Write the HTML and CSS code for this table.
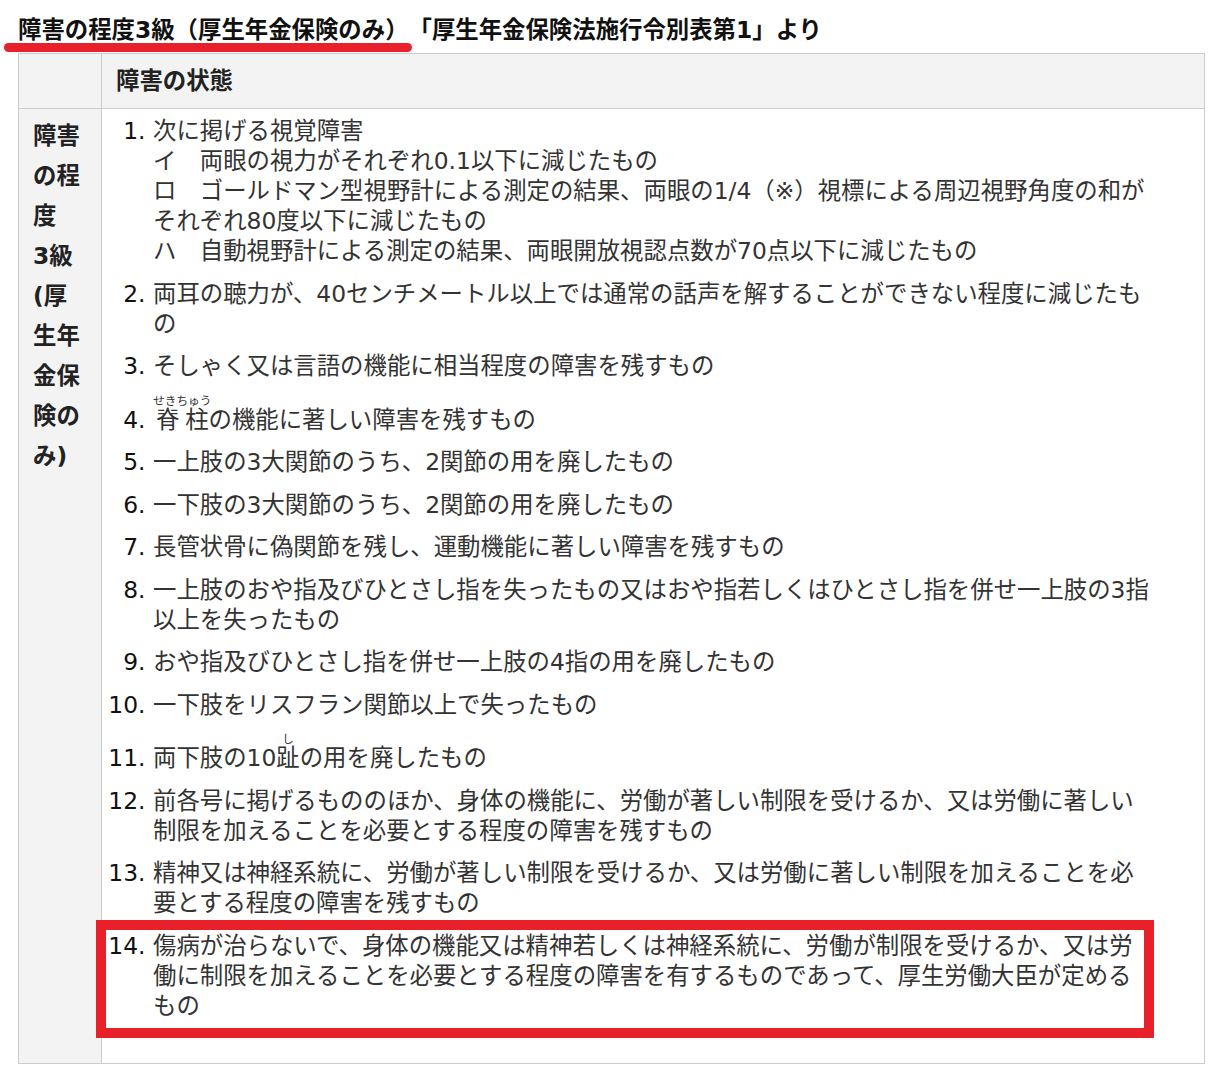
FILE: index.html
```html
<!DOCTYPE html>
<html lang="ja">

<head>
    <meta charset="UTF-8">
    <meta name="viewport" content="width=device-width, initial-scale=1.0">
    <title>障害の程度3級</title>
    <link rel="stylesheet" href="styles.css">
</head>

<body>
    <div class="page">
        <h2 class="title"><span class="marked">障害の程度3級（厚生年金保険のみ）</span>「厚生年金保険法施行令別表第1」より</h2>

        <table class="grade-table">
            <thead>
                <tr>
                    <th class="label"></th>
                    <th>障害の状態</th>
                </tr>
            </thead>
            <tbody>
                <tr>
                    <th class="label" scope="row">障害の程度<br>3級<br>(厚生年金保険のみ)</th>
                    <td>
                        <ol class="conditions">
                            <li>次に掲げる視覚障害<br>イ　両眼の視力がそれぞれ0.1以下に減じたもの<br>ロ　ゴールドマン型視野計による測定の結果、両眼の1/4（※）視標による周辺視野角度の和がそれぞれ80度以下に減じたもの<br>ハ　自動視野計による測定の結果、両眼開放視認点数が70点以下に減じたもの</li>
                            <li>両耳の聴力が、40センチメートル以上では通常の話声を解することができない程度に減じたもの</li>
                            <li>そしゃく又は言語の機能に相当程度の障害を残すもの</li>
                            <li><ruby>脊柱<rt>せきちゅう</rt></ruby>の機能に著しい障害を残すもの</li>
                            <li>一上肢の3大関節のうち、2関節の用を廃したもの</li>
                            <li>一下肢の3大関節のうち、2関節の用を廃したもの</li>
                            <li>長管状骨に偽関節を残し、運動機能に著しい障害を残すもの</li>
                            <li>一上肢のおや指及びひとさし指を失ったもの又はおや指若しくはひとさし指を併せ一上肢の3指以上を失ったもの</li>
                            <li>おや指及びひとさし指を併せ一上肢の4指の用を廃したもの</li>
                            <li>一下肢をリスフラン関節以上で失ったもの</li>
                            <li>両下肢の10<ruby>趾<rt>し</rt></ruby>の用を廃したもの</li>
                            <li>前各号に掲げるもののほか、身体の機能に、労働が著しい制限を受けるか、又は労働に著しい制限を加えることを必要とする程度の障害を残すもの</li>
                            <li>精神又は神経系統に、労働が著しい制限を受けるか、又は労働に著しい制限を加えることを必要とする程度の障害を残すもの</li>
                            <li class="highlight">傷病が治らないで、身体の機能又は精神若しくは神経系統に、労働が制限を受けるか、又は労働に制限を加えることを必要とする程度の障害を有するものであって、厚生労働大臣が定めるもの</li>
                        </ol>
                    </td>
                </tr>
            </tbody>
        </table>
    </div>
</body>

</html>
```

FILE: styles.css
```css
body {
    margin: 0;
    background-color: #fff;
    color: #333;
    font-family: "DejaVu Sans", "Noto Sans CJK JP", sans-serif;
    font-size: 23.4px;
}

.page {
    padding: 0 18px;
}

.title {
    margin: 12px 0 5px;
    font-size: 23.4px;
    line-height: 36px;
    color: #111;
    font-weight: bold;
}

.marked {
    display: inline-block;
    position: relative;
}

/* red hand-drawn underline */
.marked::after {
    content: "";
    position: absolute;
    left: -14px;
    right: -3px;
    top: 31px;
    height: 9px;
    border-radius: 5px;
    background-color: #e8202a;
}

.grade-table {
    width: 1187px;
    border-collapse: collapse;
    border: 1px solid #ccc;
}

.grade-table th,
.grade-table td {
    border: 1px solid #ccc;
    padding: 7px 14px;
    text-align: left;
    vertical-align: top;
}

.grade-table th {
    background-color: #f3f3f3;
    color: #222;
    font-weight: bold;
    line-height: 40px;
}

.grade-table .label {
    width: 48px;
    padding-right: 20px;
}

.grade-table td {
    background-color: #fff;
    line-height: 30px;
}

.conditions {
    margin: 0 0 35px;
    padding: 0 38px 0 37px;
}

.conditions li {
    margin-bottom: 12.5px;
}

.conditions li::marker {
    color: #111;
}

.conditions rt {
    font-size: 50%;
    line-height: 14px;
}

.highlight {
    position: relative;
}

.highlight::before {
    content: "";
    position: absolute;
    left: -57px;
    right: -2px;
    top: -11px;
    bottom: -17px;
    border: 10px solid #e8202a;
    pointer-events: none;
}
```
